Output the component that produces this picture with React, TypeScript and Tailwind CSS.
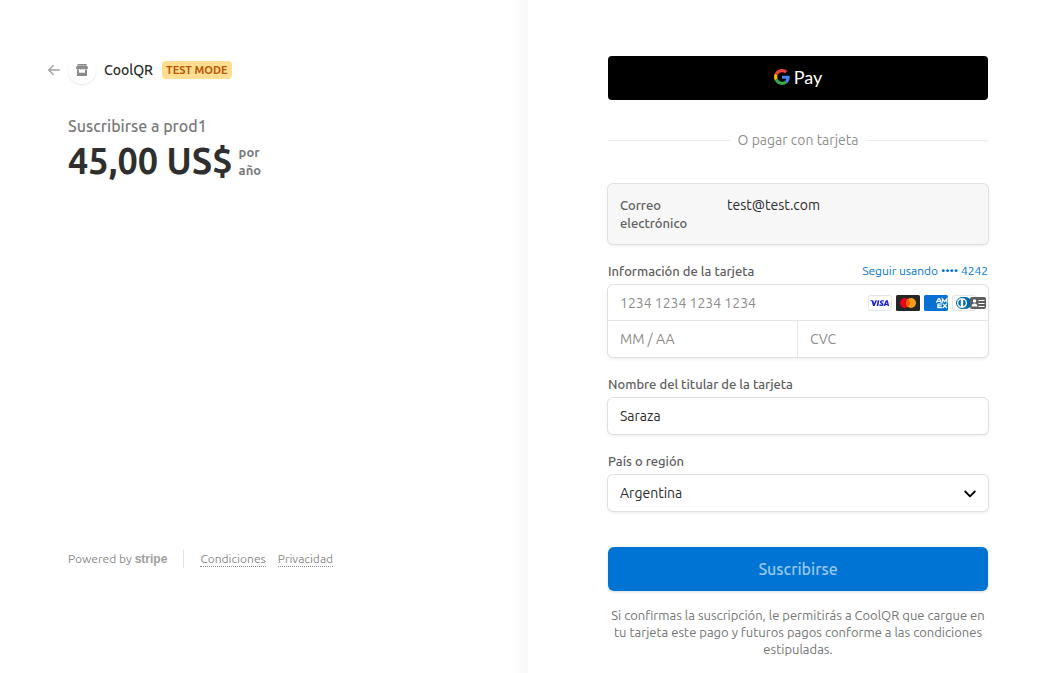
import type { ReactNode } from "react";

const fieldShadow =
  "shadow-[0_0_0_1px_#e0e0e0,0_2px_4px_0_rgba(0,0,0,0.07),0_1px_2px_0_rgba(0,0,0,0.05)]";

function ArrowIcon() {
  return (
    <svg width="12" height="12" viewBox="0 0 16 16" fill="#a3a3a3" aria-hidden="true">
      <path d="M3.400 7h11.600a1 1 0 0 1 0 2H3.400l4.300 4.300a1 1 0 0 1-1.400 1.400l-6-6a1 1 0 0 1 0-1.400l6-6a1 1 0 0 1 1.400 1.400L3.400 7z" />
    </svg>
  );
}

function StoreIcon() {
  return (
    <svg width="12" height="12" viewBox="0 0 12 12" aria-hidden="true">
      <path fill="#8a8a8a" d="M1.500 0h9v1.300h-9z" />
      <path
        fill="#8a8a8a"
        d="M1 1.600h10l1 2.200C12 5 11.300 5.500 10.500 5.500S9.200 5.200 9 4.800c-.3.400-.8.700-1.500.700S6.300 5.200 6 4.800c-.3.400-.8.700-1.500.700S3.300 5.200 3 4.800c-.3.400-.7.700-1.500.700S0 5 0 3.800z"
      />
      <path fill="#8a8a8a" fillRule="evenodd" d="M1 5.500h10V12H1zM3 5.500v3.300h6V5.500z" />
    </svg>
  );
}

function GoogleG() {
  return (
    <svg width="16" height="16" viewBox="0 0 48 48" aria-hidden="true">
      <path fill="#EA4335" d="M24 9.500c3.540 0 6.710 1.220 9.210 3.600l6.850-6.850C35.900 2.380 30.470 0 24 0 14.620 0 6.510 5.380 2.560 13.220l7.980 6.190C12.430 13.720 17.740 9.500 24 9.500z" />
      <path fill="#4285F4" d="M46.980 24.550c0-1.570-.15-3.090-.38-4.550H24v9.020h12.940c-.58 2.960-2.260 5.480-4.780 7.180l7.730 6c4.510-4.180 7.090-10.360 7.090-17.650z" />
      <path fill="#FBBC05" d="M10.530 28.590c-.48-1.450-.76-2.990-.76-4.590s.27-3.140.76-4.590l-7.980-6.190C.92 16.460 0 20.120 0 24s.92 7.540 2.560 10.780l7.970-6.190z" />
      <path fill="#34A853" d="M24 48c6.480 0 11.930-2.130 15.890-5.810l-7.730-6c-2.150 1.450-4.920 2.300-8.160 2.300-6.260 0-11.570-4.220-13.470-9.910l-7.980 6.190C6.510 42.620 14.620 48 24 48z" />
    </svg>
  );
}

function VisaIcon() {
  return (
    <svg width="24" height="16" viewBox="0 0 24 16" role="img" aria-label="Visa">
      <rect x="0.500" y="0.500" width="23" height="15" rx="1.500" fill="#fff" stroke="#e6e6e6" />
      <path
        fill="#1a1fe0"
        d="M2.200 5.300h2.500c.4 0 .7.200.8.600l.5 2.700L7.400 5.300h1.700l-2.500 5.600H5L3.700 6.500c-.1-.3-.3-.5-1.500-.8zM9.700 5.300h1.600l-1 5.600H8.700zM16 5.500l-.3 1.300c-1-.5-2.200-.4-2.200.1 0 .7 2.100.8 2 2.300-.1 1.900-2.500 2.100-4.200 1.500l.3-1.400c1.300.6 2.300.4 2.300 0 0-.7-2.100-.8-2-2.300.1-1.800 2.600-2.100 4.100-1.500zM18.300 5.300h1.500l1.300 5.600h-1.500l-.2-.9h-2l-.4.900h-1.600l2.300-5.200c.1-.3.3-.4.600-.4zm.6 1.800-.8 1.800h1.200z"
      />
    </svg>
  );
}

function MastercardIcon() {
  return (
    <svg width="24" height="16" viewBox="0 0 24 16" role="img" aria-label="Mastercard">
      <rect width="24" height="16" rx="1.500" fill="#252525" />
      <circle cx="9" cy="8" r="5" fill="#eb001b" />
      <circle cx="15" cy="8" r="5" fill="#f79e1b" />
      <path d="M12 4a5 5 0 0 1 0 8 5 5 0 0 1 0-8z" fill="#ff5f00" />
    </svg>
  );
}

function AmexIcon() {
  return (
    <svg width="24" height="16" viewBox="0 0 24 16" role="img" aria-label="American Express">
      <rect width="24" height="16" rx="1.500" fill="#0671d3" />
      <g fill="none" stroke="#fff" strokeWidth="1.200">
        <path d="M12.300 7.700 14.500 3.600h.8l2 4.100M13.300 6.400h3.200M18.300 7.700V3.800l2.300 2.800 2.300-2.800v3.900" />
        <path d="M18 9h-4.100v3.700H18M13.900 10.900h3.600M18.800 8.700l4.200 4.300M23 8.700 18.800 13" />
      </g>
    </svg>
  );
}

function DinersIcon() {
  return (
    <svg width="24" height="16" viewBox="0 0 24 16" role="img" aria-label="Diners Club">
      <rect x="0.500" y="0.500" width="23" height="15" rx="1.500" fill="#fff" stroke="#e6e6e6" />
      <path d="M10 2h3.500a6 6 0 0 1 0 12H10z" fill="#0069aa" />
      <circle cx="10" cy="8" r="5.500" fill="#fff" stroke="#0069aa" strokeWidth="1" />
      <path d="M8.800 4.400v7.200a3.800 3.800 0 0 1 0-7.200zM11.200 4.400v7.200a3.800 3.800 0 0 0 0-7.200z" fill="#0069aa" />
    </svg>
  );
}

function ContactIcon() {
  return (
    <svg width="16" height="12" viewBox="0 0 16 12" aria-hidden="true">
      <rect width="16" height="12" rx="2" fill="#5e5e5e" />
      <circle cx="4.500" cy="4" r="1.700" fill="#fff" />
      <path d="M1.600 9.500c0-2 1.200-3 2.900-3s2.900 1 2.900 3z" fill="#fff" />
      <path d="M8.500 3.500h6M8.500 6.500h6M8.500 9.500h6" stroke="#fff" strokeWidth="1" />
    </svg>
  );
}

function Field({ id, label, children }: { id: string; label: string; children: ReactNode }) {
  return (
    <div className="mt-[18px]">
      <label htmlFor={id} className="block text-[13px] leading-[18px] font-medium text-[#5e5e5e]">
        {label}
      </label>
      <div className="mt-[5px]">{children}</div>
    </div>
  );
}

function Summary() {
  return (
    <section className="flex flex-col bg-linear-to-l from-[#f9f9f9] to-white to-[18px] pt-14 pr-12 pb-[104px] pl-12">
      <header className="flex h-7 items-center">
        <a href="#volver" aria-label="Volver" className="flex w-5 items-center">
          <ArrowIcon />
        </a>
        <span className="flex size-7 items-center justify-center rounded-full bg-white shadow-[0_1px_2px_rgba(0,0,0,0.1)]">
          <StoreIcon />
        </span>
        <span className="ml-2 text-sm font-medium text-[#2b2b2b]">CoolQR</span>
        <span className="ml-[9px] rounded-[4px] bg-[#ffde92] px-1 text-[11px] leading-[18px] font-bold text-[#bb5504]">
          TEST MODE
        </span>
      </header>
      <div className="mt-[30px] pl-5">
        <h1 className="text-[16px] leading-6 font-medium text-[#7a7a7a]">Suscribirse a prod1</h1>
        <div className="mt-[3px] flex items-center gap-[6px]">
          <span className="text-[36px] leading-10 font-bold text-[#2f2f2f]">45,00 US$</span>
          <span className="text-[13px] leading-[18px] font-bold text-[#7a7a7a]">
            por
            <br />
            año
          </span>
        </div>
      </div>
      <footer className="mt-auto flex h-5 items-center pl-5 text-[12px] text-[#8a8a8a]">
        <a href="#stripe" className="flex items-center gap-[3px]">
          Powered by
          <span className="font-['Liberation_Sans',sans-serif] text-[12px] font-bold text-[#a0a0a0]">stripe</span>
        </a>
        <span className="mr-4 ml-4 h-[18px] w-px bg-[#e3e3e3]" />
        <nav className="flex gap-3">
          <a href="#condiciones" className="border-b border-dotted border-[#8a8a8a] leading-[14px]">
            Condiciones
          </a>
          <a href="#privacidad" className="border-b border-dotted border-[#8a8a8a] leading-[14px]">
            Privacidad
          </a>
        </nav>
      </footer>
    </section>
  );
}

function PaymentForm() {
  return (
    <main className="bg-white pt-14 pr-16 pb-3 pl-20">
      <form>
        <button
          type="button"
          aria-label="Google Pay"
          className="flex h-11 w-full items-center justify-center gap-1 rounded-[4px] bg-black pb-[3px] text-white"
        >
          <GoogleG />
          <span className="font-['Lato',sans-serif] text-[18px] leading-5">Pay</span>
        </button>

        <div className="mt-[30px] flex h-5 items-center gap-2 text-[14px] text-[#8f8f8f]">
          <span className="h-px flex-1 bg-[#ebebeb]" />
          O pagar con tarjeta
          <span className="h-px flex-1 bg-[#ebebeb]" />
        </div>

        <div className={`mt-[34px] flex rounded-[5px] bg-[#f7f7f7] p-3 leading-[18px] ${fieldShadow}`}>
          <span className="w-[107px] pr-6 text-[13px] font-medium text-[#5e5e5e]">Correo electrónico</span>
          <span className="text-[14px] text-[#2b2b2b]">test@test.com</span>
        </div>

        <fieldset className="mt-[18px]">
          <div className="flex h-[18px] items-center justify-between">
            <label htmlFor="card" className="text-[13px] leading-[18px] font-medium text-[#5e5e5e]">
              Información de la tarjeta
            </label>
            <button type="button" className="text-[12px] leading-[18px] text-[#0074d4]">
              Seguir usando •••• 4242
            </button>
          </div>
          <div className={`mt-[5px] rounded-[5px] bg-white ${fieldShadow}`}>
            <div className="relative flex h-9 items-center border-b border-[#e6e6e6] pl-3">
              <input
                id="card"
                placeholder="1234 1234 1234 1234"
                className="h-9 min-w-0 flex-1 bg-transparent text-[14px] outline-none placeholder:text-[#8c8c8c]"
              />
              <span className="flex gap-1 pr-3">
                <VisaIcon />
                <MastercardIcon />
                <AmexIcon />
                <DinersIcon />
              </span>
              <span className="absolute right-[2px]">
                <ContactIcon />
              </span>
            </div>
            <div className="flex h-9">
              <input
                aria-label="Vencimiento"
                placeholder="MM / AA"
                className="w-1/2 rounded-bl-[5px] border-r border-[#e6e6e6] px-3 text-[14px] outline-none placeholder:text-[#8c8c8c]"
              />
              <input
                aria-label="CVC"
                placeholder="CVC"
                className="w-1/2 rounded-br-[5px] px-3 text-[14px] outline-none placeholder:text-[#8c8c8c]"
              />
            </div>
          </div>
        </fieldset>

        <Field id="name" label="Nombre del titular de la tarjeta">
          <input
            id="name"
            defaultValue="Saraza"
            className={`block h-9 w-full rounded-[5px] bg-white px-3 text-[14px] text-[#2b2b2b] outline-none ${fieldShadow}`}
          />
        </Field>

        <Field id="country" label="País o región">
          <div className="relative flex items-center">
            <select
              id="country"
              defaultValue="Argentina"
              className={`block h-9 w-full appearance-none rounded-[5px] bg-white px-3 text-[14px] text-[#2b2b2b] outline-none ${fieldShadow}`}
            >
              <option>Argentina</option>
            </select>
            <svg
              className="pointer-events-none absolute right-3"
              width="12"
              height="12"
              viewBox="0 0 12 12"
              fill="none"
              stroke="#000"
              strokeWidth="1.800"
              strokeLinecap="round"
              strokeLinejoin="round"
              aria-hidden="true"
            >
              <path d="M1.200 4.500 6 9.300l4.800-4.800" />
            </svg>
          </div>
        </Field>

        <button
          type="submit"
          className="mt-9 block h-11 w-full rounded-[6px] bg-[#0074d4] text-[16px] font-medium text-[#99c8ee] shadow-[0_1px_3px_rgba(0,0,0,0.16)]"
        >
          Suscribirse
        </button>
        <p className="mt-4 text-center text-[13px] leading-[17px] text-[#757575]">
          Si confirmas la suscripción, le permitirás a CoolQR que cargue en tu tarjeta este pago y futuros pagos
          conforme a las condiciones estipuladas.
        </p>
      </form>
    </main>
  );
}

export default function App() {
  return (
    <div className="grid min-h-screen grid-cols-[528fr_524fr] bg-white font-['Ubuntu','Noto_Sans',sans-serif]">
      <Summary />
      <PaymentForm />
    </div>
  );
}
